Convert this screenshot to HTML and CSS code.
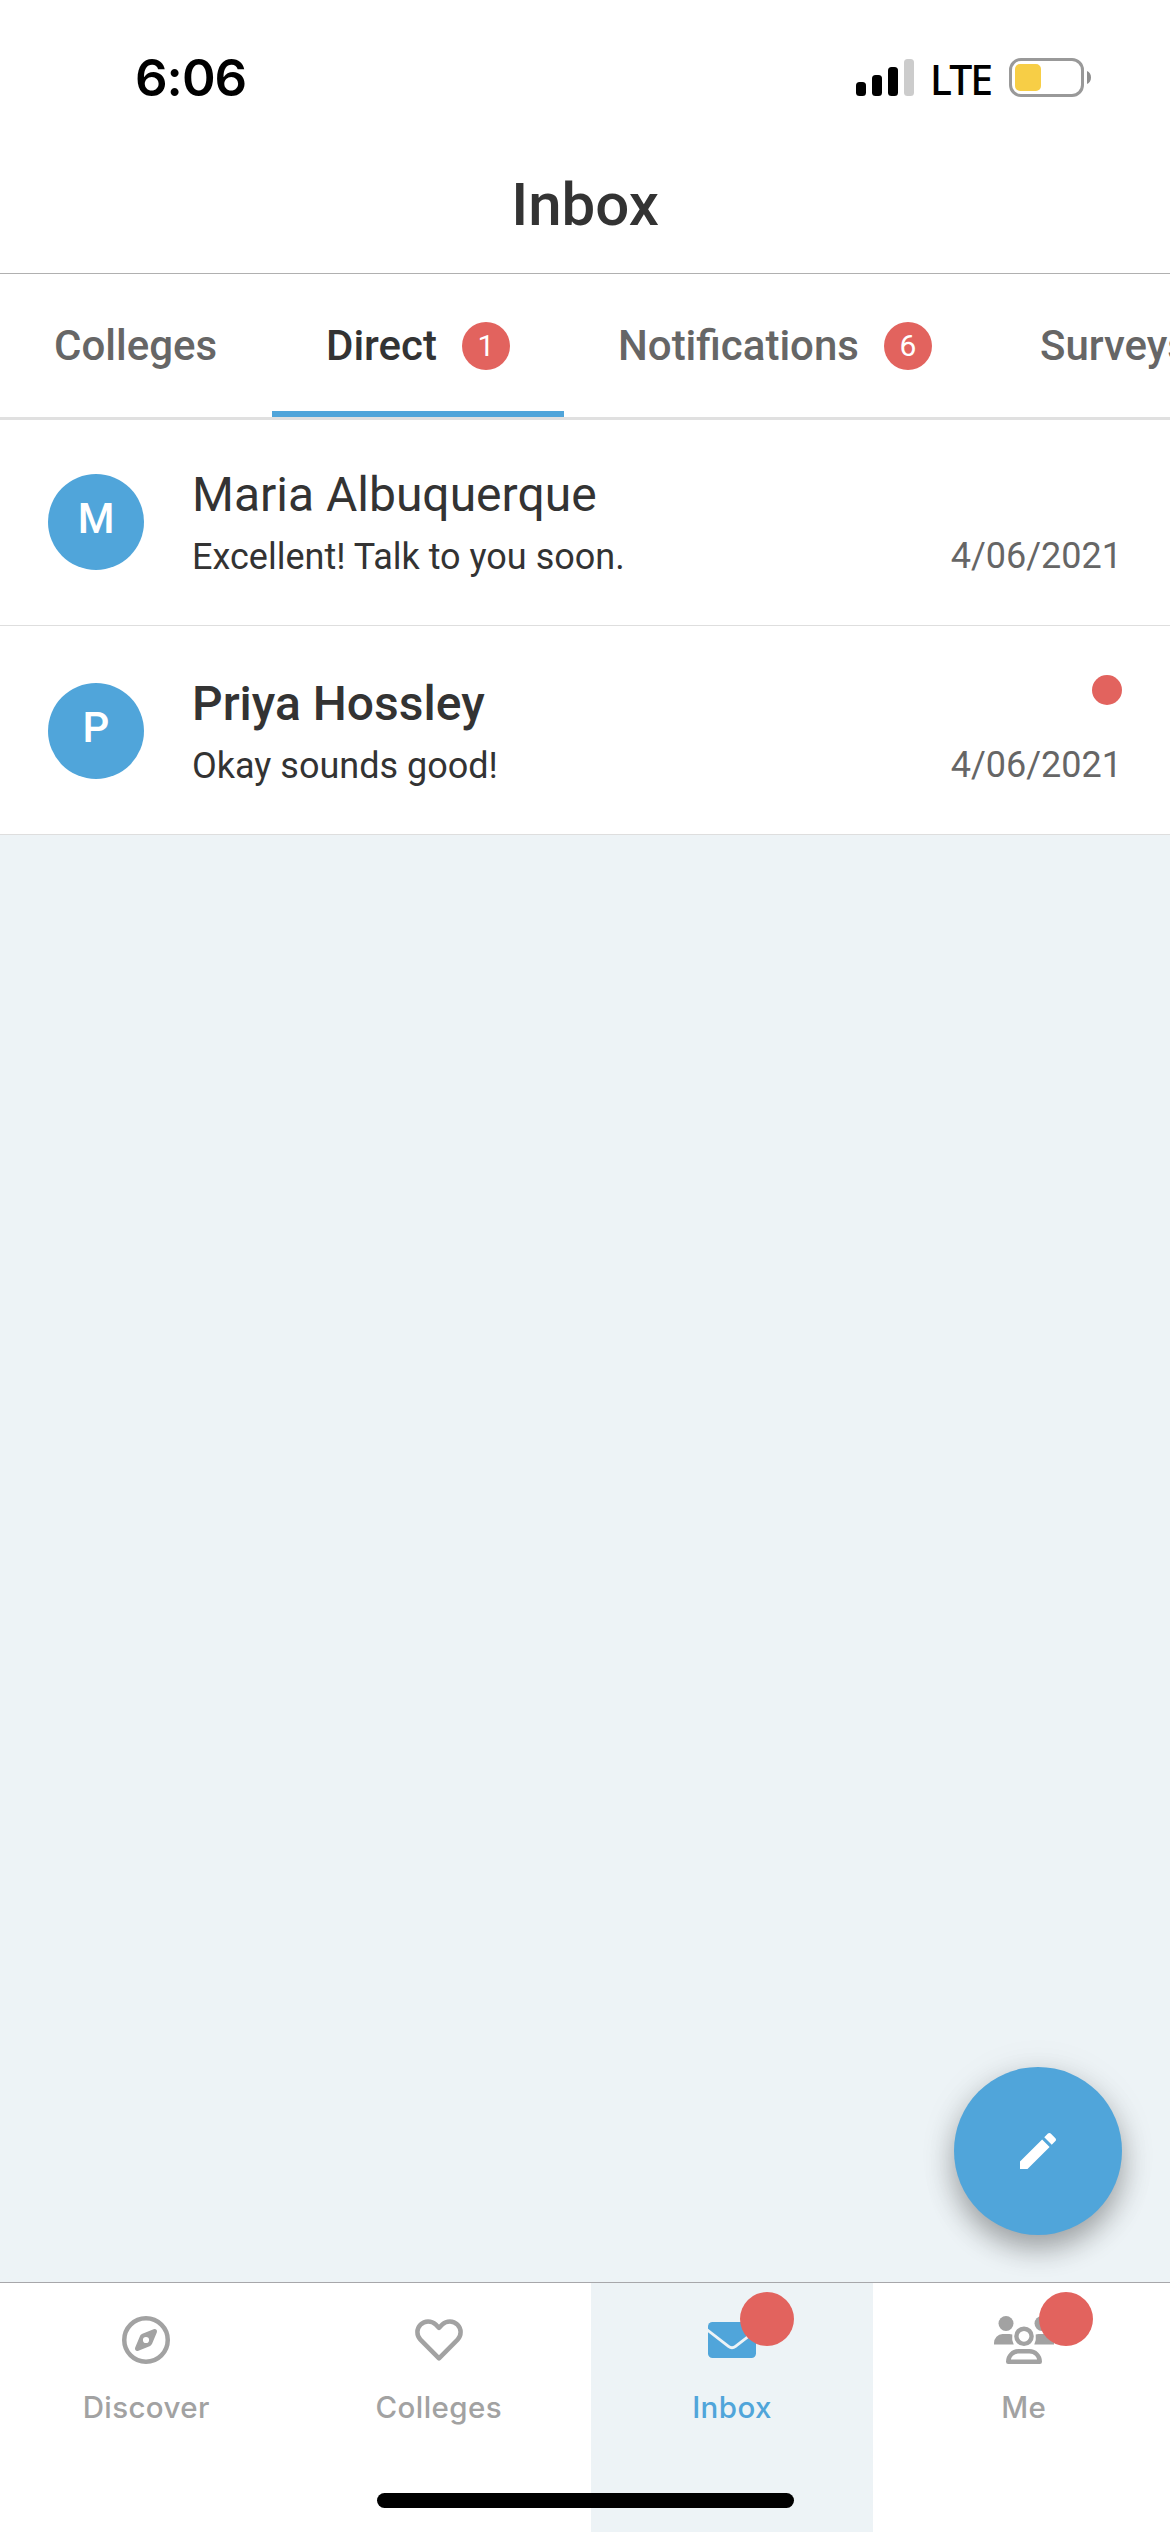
FILE: index.html
```html
<!DOCTYPE html>
<html lang="en">
<head>
<meta charset="utf-8">
<title>Inbox</title>
<link rel="stylesheet" href="styles.css">
</head>
<body>
<div class="app">
  <div class="status">
    <div class="clock">6:06</div>
    <div class="indicators">
      <svg class="signal" width="58" height="38" viewBox="0 0 58 38">
        <rect x="0" y="23" width="10" height="14" rx="3.5"/>
        <rect x="16" y="16" width="10" height="21" rx="3.5"/>
        <rect x="32" y="8" width="10" height="29" rx="3.5"/>
        <rect x="48" y="0" width="10" height="37" rx="3.5" fill="#ccc"/>
      </svg>
      <span class="network">LTE</span>
      <svg class="battery" width="83" height="39" viewBox="0 0 83 39">
        <rect x="1.5" y="1.5" width="72" height="36" rx="10.5" fill="none" stroke="#999" stroke-width="3"/>
        <rect x="6" y="6" width="26" height="27" rx="5" fill="#f7ce46"/>
        <path d="M78 13c2.600 1 4 3.500 4 6.500s-1.400 5.500-4 6.500z" fill="#8e8e8e"/>
      </svg>
    </div>
  </div>

  <header class="title">Inbox</header>

  <nav class="tabs">
    <div class="tab tab-first">Colleges</div>
    <div class="tab tab-active">Direct <span class="count">1</span></div>
    <div class="tab">Notifications <span class="count">6</span></div>
    <div class="tab">Surveys</div>
  </nav>

  <main class="content">
    <article class="row">
      <div class="avatar">M</div>
      <div class="message">
        <div class="name">Maria Albuquerque</div>
        <div class="preview">Excellent! Talk to you soon.</div>
      </div>
      <div class="meta">
        <span class="date">4/06/2021</span>
      </div>
    </article>
    <article class="row row-unread">
      <div class="avatar">P</div>
      <div class="message">
        <div class="name">Priya Hossley</div>
        <div class="preview">Okay sounds good!</div>
      </div>
      <div class="meta">
        <span class="dot"></span>
        <span class="date">4/06/2021</span>
      </div>
    </article>
    <button class="compose" aria-label="Compose">
      <svg width="48" height="48" viewBox="0 0 24 24" fill="#fff"><path d="M3 17.250V21h3.750L17.810 9.940l-3.750-3.750L3 17.250zM20.710 7.040c.39-.39.39-1.020 0-1.410l-2.340-2.340c-.39-.39-1.020-.39-1.410 0l-1.830 1.830 3.750 3.750 1.830-1.830z"/></svg>
    </button>
  </main>

  <footer class="bar">
    <div class="item">
      <svg class="icon" width="48" height="48" viewBox="0 0 48 48">
        <circle cx="24" cy="24" r="21.750" fill="none" stroke="currentColor" stroke-width="4.500"/>
        <path fill="currentColor" fill-rule="evenodd" d="M31.600 13.200c2.200-.8 4.100 1.100 3.200 3.200l-4.600 11.200c-.5 1.200-1.400 2.100-2.600 2.600l-11.200 4.600c-2.200.9-4.100-1-3.200-3.200l4.600-11.200c.5-1.200 1.400-2.100 2.600-2.600zM24 20.900a3.100 3.100 0 1 0 0 6.200 3.100 3.100 0 0 0 0-6.200z"/>
      </svg>
      <span>Discover</span>
    </div>
    <div class="item">
      <svg class="icon" width="48" height="48" viewBox="0 -3 48 48">
        <path fill="none" stroke="currentColor" stroke-width="4.500" stroke-linejoin="round" d="M24 8.800L20.600 5.400A10.750 10.750 0 0 0 5.400 20.600L24 39.400L42.600 20.600A10.750 10.750 0 0 0 27.400 5.400Z"/>
      </svg>
      <span>Colleges</span>
    </div>
    <div class="item item-active">
      <svg class="icon" width="48" height="48" viewBox="0 0 48 48">
        <rect x="0" y="6" width="48" height="36" rx="4.500" fill="currentColor"/>
        <path d="M-1 13.700L20.500 30.300Q24 33 27.500 30.300L49 13.700" fill="none" stroke="#edf3f6" stroke-width="2.900"/>
      </svg>
      <span>Inbox</span>
      <i class="alert"></i>
    </div>
    <div class="item">
      <svg class="icon" width="60" height="48" viewBox="0 0 60 48">
        <g fill="currentColor">
          <circle cx="12" cy="7.500" r="7.500"/>
          <circle cx="48" cy="7.500" r="7.500"/>
          <path d="M8.500 18h7q1.600 0 2.800.6q-.8 5.200 1.400 9.900H0v-1.500A8.500 9 0 0 1 8.500 18z"/>
          <path d="M51.500 18h-7q-1.600 0-2.800.6q.8 5.200-1.400 9.900H60v-1.500A8.500 9 0 0 0 51.500 18z"/>
        </g>
        <circle cx="30" cy="20.300" r="7.600" fill="none" stroke="currentColor" stroke-width="4.400"/>
        <path d="M24.500 35.200h11c5.500 0 10.300 4.500 10.300 10.550H14.200c0-6.050 4.800-10.550 10.300-10.550z" fill="none" stroke="currentColor" stroke-width="4.400" stroke-linejoin="round"/>
      </svg>
      <span>Me</span>
      <i class="alert alert-wide"></i>
    </div>
    <div class="home"></div>
  </footer>
</div>
</body>
</html>
```
FILE: styles.css
```css
* { box-sizing: border-box; }

body {
  margin: 0;
  background: #fff;
  color: #333;
  font-family: Roboto, sans-serif;
}

.app {
  width: 1170px;
  height: 2532px;
  display: flex;
  flex-direction: column;
  overflow: hidden;
}

.status {
  height: 141px;
  flex: none;
  display: flex;
  justify-content: space-between;
  padding: 0 78px 0 135px;
  color: #000;
}

.clock {
  font: 600 51px/60px Inter, sans-serif;
  letter-spacing: -1px;
  padding-top: 48px;
}

.indicators {
  display: flex;
  align-items: flex-start;
}

.signal { margin-top: 59px; }
.battery { margin-top: 58px; }

.network {
  width: 95px;
  padding-left: 16px;
  margin-top: 54px;
  font: 500 41px/50px "Noto Sans", sans-serif;
  letter-spacing: -1.9px;
}

.title {
  height: 133px;
  flex: none;
  border-bottom: 1px solid #b0b0b0;
  font-size: 60px;
  font-weight: 500;
  line-height: 127px;
  text-align: center;
}

.tabs {
  height: 146px;
  flex: none;
  display: flex;
  border-bottom: 3px solid #e0e0e0;
  overflow: hidden;
}

.tab {
  flex: none;
  display: flex;
  align-items: center;
  gap: 25px;
  padding: 0 54px;
  color: #666;
  font-size: 42px;
  font-weight: 500;
}

.tab-first { width: 272px; }

.tab-active {
  color: #333;
  box-shadow: inset 0 -6px #50a5da;
}

.count {
  width: 48px;
  height: 48px;
  border-radius: 50%;
  background: #e2635e;
  color: #fff;
  font-size: 30px;
  font-weight: 400;
  line-height: 48px;
  text-align: center;
}

.content {
  position: relative;
  flex: 1;
  background: #edf3f6;
}

.row {
  height: 206px;
  display: flex;
  align-items: flex-start;
  padding: 46px 48px 0;
  background: #fff;
  border-bottom: 1px solid #dedede;
}

.row-unread {
  height: 209px;
  padding-top: 49px;
}

.avatar {
  width: 96px;
  height: 96px;
  margin-top: 8px;
  border-radius: 50%;
  background: #50a5da;
  color: #fff;
  font-size: 42px;
  font-weight: 500;
  line-height: 90px;
  text-align: center;
}

.message {
  flex: 1;
  padding: 1px 0 0 48px;
}

.name {
  font-size: 48px;
  line-height: 56px;
}

.row-unread .name { font-weight: 500; }

.preview {
  margin-top: 13px;
  font-size: 36px;
  line-height: 42px;
}

.meta {
  height: 111px;
  display: flex;
  flex-direction: column;
  align-items: flex-end;
}

.dot {
  width: 30px;
  height: 30px;
  border-radius: 50%;
  background: #e2635e;
}

.date {
  margin-top: auto;
  color: #666;
  font-size: 36px;
  line-height: 42px;
}

.compose {
  position: absolute;
  right: 48px;
  bottom: 47px;
  width: 168px;
  height: 168px;
  display: flex;
  align-items: center;
  justify-content: center;
  padding: 0;
  border: 0;
  border-radius: 50%;
  background: #50a5da;
  box-shadow:
    0 14px 28px rgba(0, 0, 0, .3),
    0 4px 40px rgba(0, 0, 0, .08);
}

.bar {
  position: relative;
  height: 250px;
  flex: none;
  display: grid;
  grid-template-columns: repeat(4, 1fr);
  border-top: 1px solid #a7a7aa;
  background: #fff;
}

.item {
  position: relative;
  display: flex;
  flex-direction: column;
  align-items: center;
  gap: 25px;
  padding-top: 33px;
  color: #a2a2a2;
  font: 500 29.5px/36px Inter, sans-serif;
  letter-spacing: .4px;
}

.item-active {
  margin: 0 4.5px 0 6px;
  background: #edf3f6;
  color: #50a5da;
}

.alert {
  position: absolute;
  top: 9px;
  left: calc(50% + 8px);
  width: 54px;
  height: 54px;
  border-radius: 50%;
  background: #e2635e;
}

.alert-wide { left: calc(50% + 15px); }

.home {
  position: absolute;
  left: 377px;
  bottom: 24px;
  width: 417px;
  height: 15px;
  border-radius: 8px;
  background: #000;
}
```
